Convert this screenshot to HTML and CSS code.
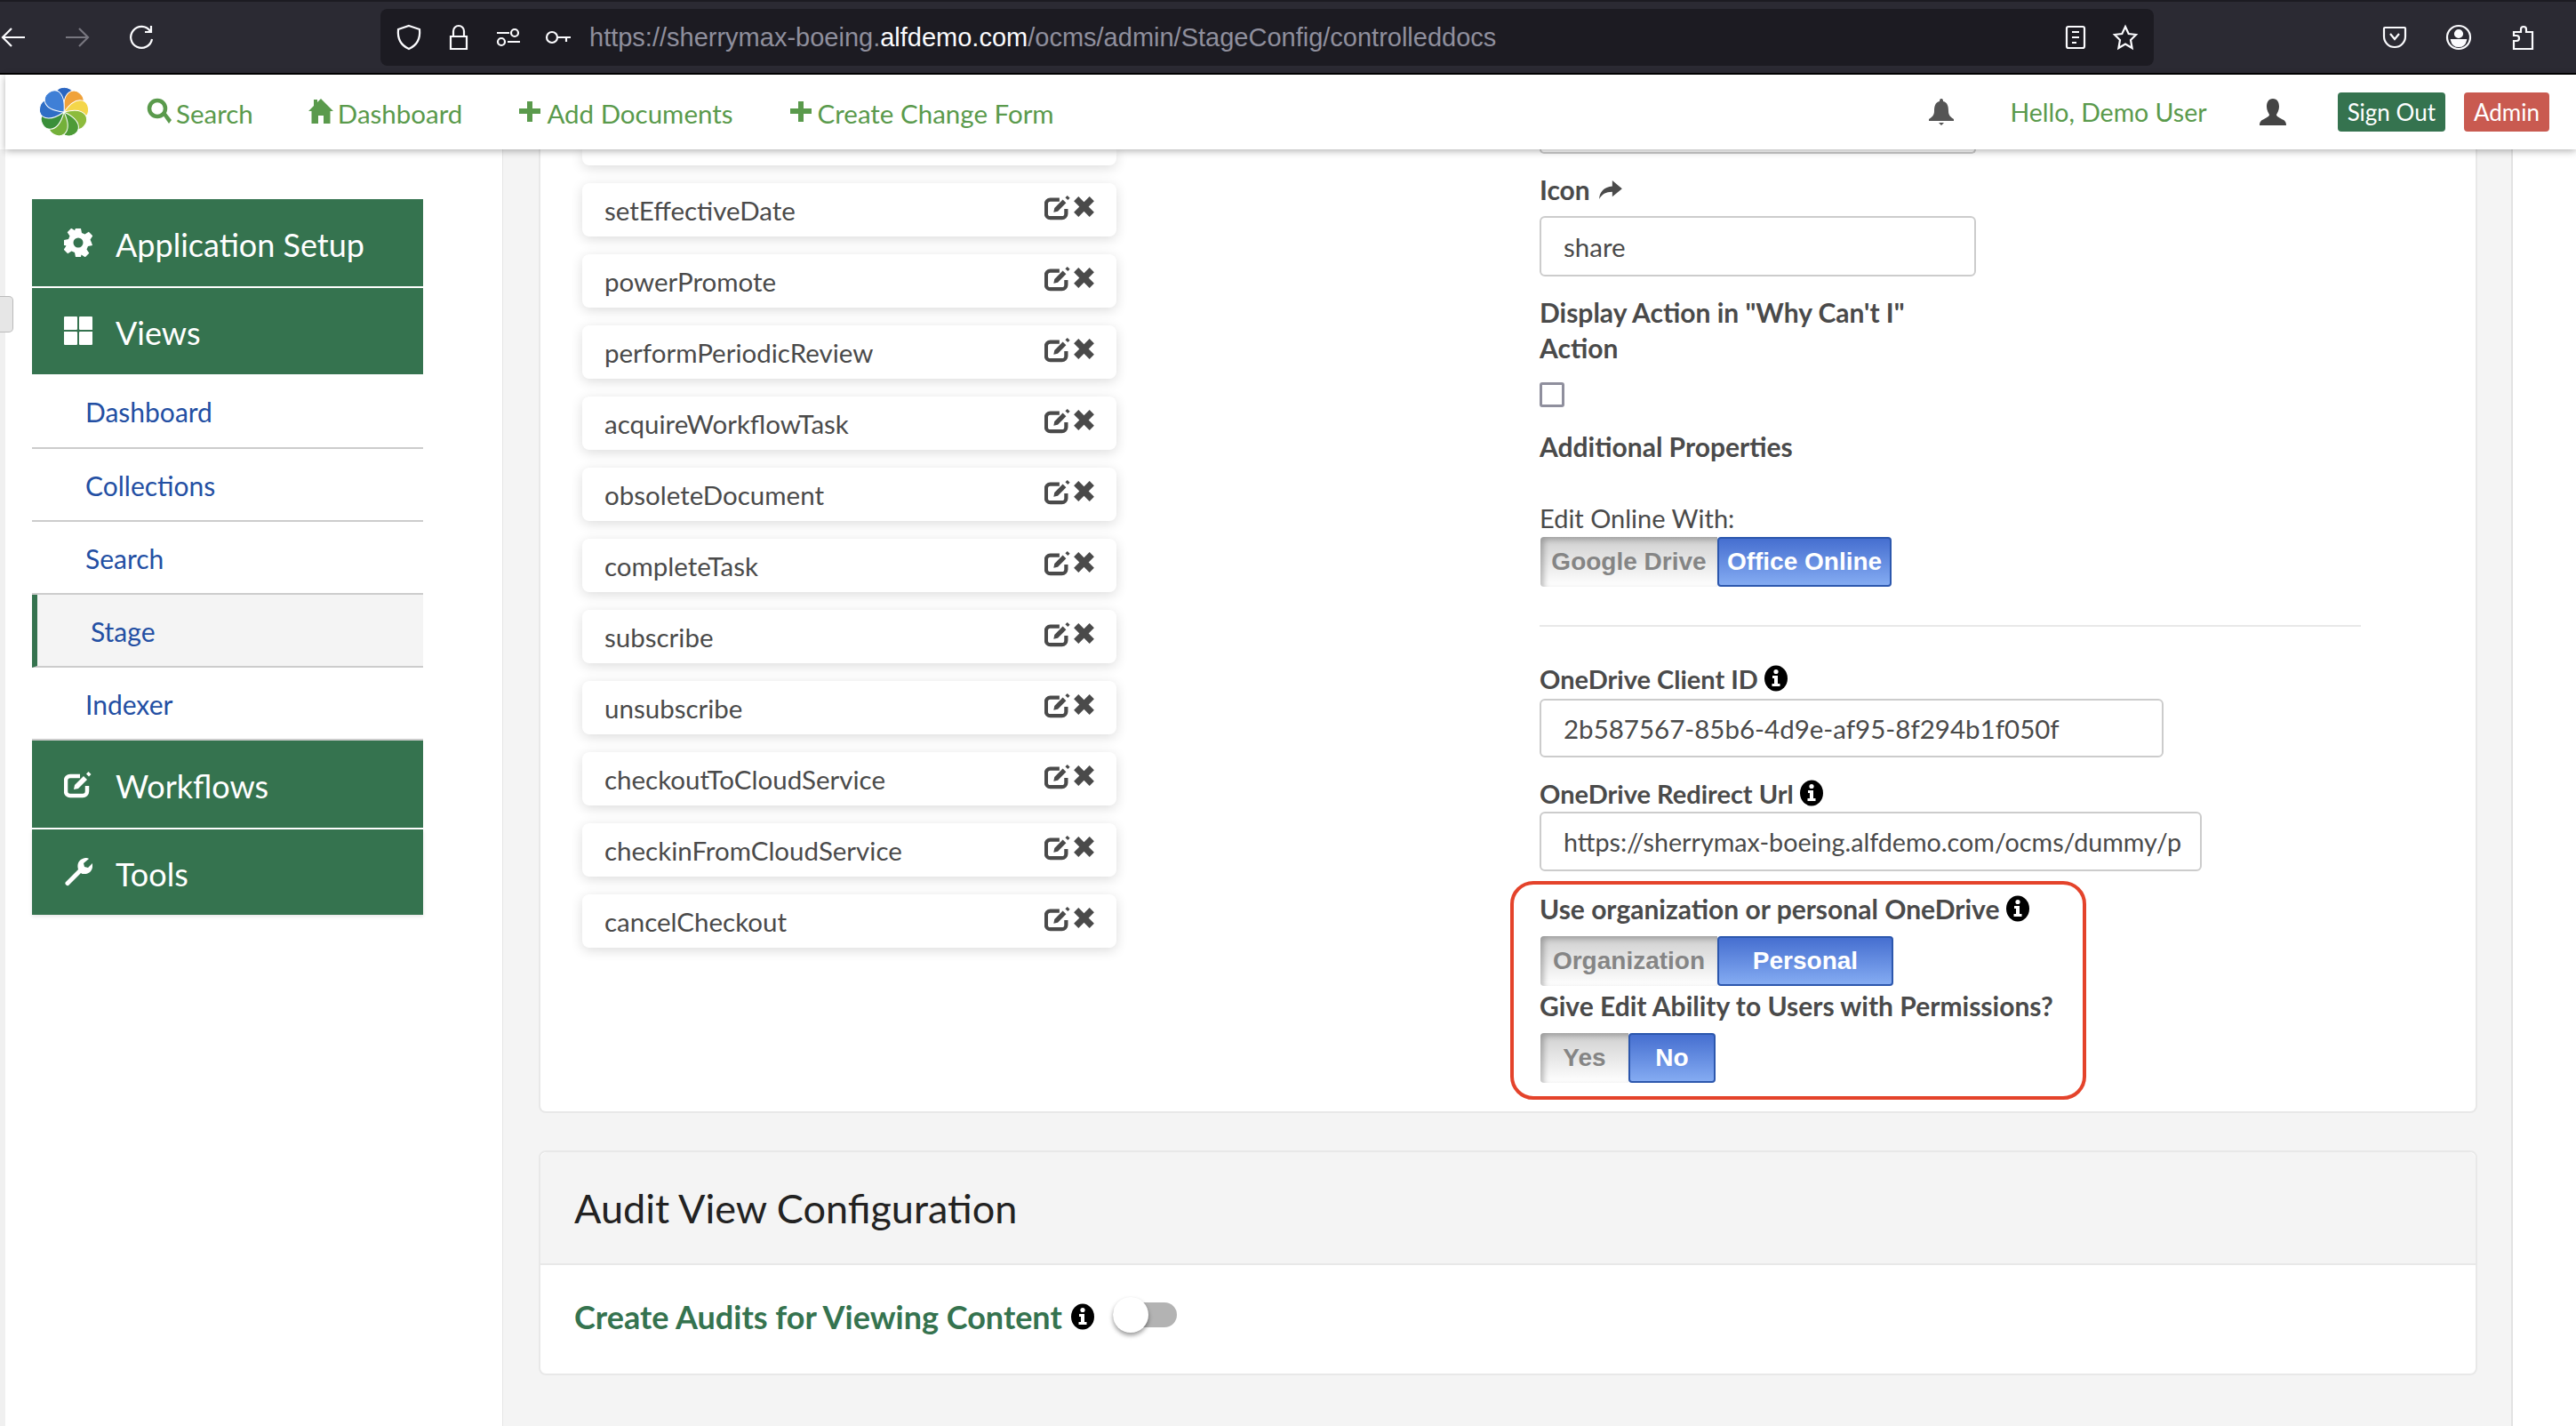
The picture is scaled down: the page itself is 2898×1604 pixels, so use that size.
FILE: index.html
```html
<!DOCTYPE html>
<html lang="en">

<head>
  <meta charset="UTF-8">
  <title>Stage Config</title>
  <link rel="stylesheet" href="styles.css">
</head>

<body>
  <svg class="icon-defs" width="0" height="0">
    <symbol id="i-edit" viewBox="0 0 32 32">
      <path d="M26 18v6a5 5 0 0 1-5 5H7a5 5 0 0 1-5-5V12a5 5 0 0 1 5-5h11" fill="none" stroke="currentColor" stroke-width="4.500"/>
      <path d="M11 22l1-5 10-10 4 4-10 10z" fill="currentColor"/>
      <path d="M25 4.500l2.500-2.500 3 3-2.500 2.500z" fill="currentColor"/>
    </symbol>
    <symbol id="i-x" viewBox="0 0 28 28">
      <path d="M3 8l5-5 6 6 6-6 5 5-6 6 6 6-5 5-6-6-6 6-5-5 6-6z" fill="currentColor"/>
    </symbol>
    <symbol id="i-info" viewBox="0 0 26 30">
      <ellipse cx="13" cy="15" rx="13" ry="14.500" fill="#000"/>
      <circle cx="13" cy="7.500" r="2.600" fill="#fff"/>
      <path d="M9 12h6v9h2.500v3h-9v-3H11v-6H9z" fill="#fff"/>
    </symbol>
  </svg>

  <!-- browser toolbar -->
  <header class="toolbar">
    <div class="tool-group">
      <svg class="tool-icon back" viewBox="0 0 30 30"><path d="M28 15H3M13 5L3 15l10 10" /></svg>
      <svg class="tool-icon forward" viewBox="0 0 30 30"><path d="M2 15h25M17 5l10 10-10 10" /></svg>
      <svg class="tool-icon reload" viewBox="0 0 30 30"><path d="M25 8A12 12 0 1 0 27 17M26 2v7h-7" /></svg>
    </div>
    <div class="urlbar">
      <svg class="tool-icon shield" viewBox="0 0 30 30"><path d="M15 2l12 4c1 10-3 18-12 22C6 24 2 16 3 6z" /></svg>
      <svg class="tool-icon lock" viewBox="0 0 30 30"><path d="M9 14V8a6 6 0 0 1 12 0v6M6 14h18v14H6z" /></svg>
      <svg class="tool-icon perm" viewBox="0 0 30 30"><path d="M2 10h14M14 20h14" /><circle cx="22" cy="10" r="4" /><circle cx="7" cy="20" r="4" /></svg>
      <svg class="tool-icon key" viewBox="0 0 30 30"><circle cx="8" cy="15" r="6" /><path d="M14 15h15M24 15v5" /></svg>
      <span class="url">https://sherrymax-boeing.<b>alfdemo.com</b>/ocms/admin/StageConfig/controlleddocs</span>
      <svg class="tool-icon reader" viewBox="0 0 30 30"><path d="M7 3h16a2 2 0 0 1 2 2v20a2 2 0 0 1-2 2H7a2 2 0 0 1-2-2V5a2 2 0 0 1 2-2zM11 9h8M11 15h8M11 21h5" /></svg>
      <svg class="tool-icon star" viewBox="0 0 30 30"><path d="M15 3l3.700 8 8.300 1-6 6 1.600 9L15 22.500 7.400 27 9 18l-6-6 8.300-1z" /></svg>
    </div>
    <div class="tool-group tool-right">
      <svg class="tool-icon pocket" viewBox="0 0 30 30"><path d="M4 4h22a1 1 0 0 1 1 1v9a12 12 0 0 1-24 0V5a1 1 0 0 1 1-1zM10 11l5 6 5-6" /></svg>
      <svg class="tool-icon account" viewBox="0 0 30 30"><circle cx="15" cy="15" r="13" /><circle cx="15" cy="11" r="4" fill="#fbfbfe" /><path d="M7 18h16c-1 5-4 7-8 7s-7-2-8-7z" fill="#fbfbfe" /></svg>
      <svg class="tool-icon puzzle" viewBox="0 0 30 30"><path d="M13 28H5v-9h3a3 3 0 0 0 0-6H5V9h8V6a3 3 0 0 1 6 0v3h7v19z" /></svg>
    </div>
  </header>

  <!-- app nav -->
  <nav class="topnav">
    <svg class="logo" viewBox="-30 -30 60 60">
      <g class="petals">
        <path transform="rotate(0)" d="M0 0C-7-7-13-15-9-23-5-30 7-29 10-22 12-14 6-6 0 0z" fill="#2b66c1"/>
        <path transform="rotate(40)" d="M0 0C-7-7-13-15-9-23-5-30 7-29 10-22 12-14 6-6 0 0z" fill="#f0a23a"/>
        <path transform="rotate(80)" d="M0 0C-7-7-13-15-9-23-5-30 7-29 10-22 12-14 6-6 0 0z" fill="#f4d64a"/>
        <path transform="rotate(120)" d="M0 0C-7-7-13-15-9-23-5-30 7-29 10-22 12-14 6-6 0 0z" fill="#8dbb3c"/>
        <path transform="rotate(160)" d="M0 0C-7-7-13-15-9-23-5-30 7-29 10-22 12-14 6-6 0 0z" fill="#4d9b37"/>
        <path transform="rotate(200)" d="M0 0C-7-7-13-15-9-23-5-30 7-29 10-22 12-14 6-6 0 0z" fill="#74b03a"/>
        <path transform="rotate(240)" d="M0 0C-7-7-13-15-9-23-5-30 7-29 10-22 12-14 6-6 0 0z" fill="#3a8f3a"/>
        <path transform="rotate(280)" d="M0 0C-7-7-13-15-9-23-5-30 7-29 10-22 12-14 6-6 0 0z" fill="#2f6ec6"/>
        <path transform="rotate(320)" d="M0 0C-7-7-13-15-9-23-5-30 7-29 10-22 12-14 6-6 0 0z" fill="#3f7fd6"/>
      </g>
    </svg>
    <div class="nav-links">
      <a class="nav-link"><svg class="nav-icon" viewBox="0 0 28 30"><circle cx="12" cy="12" r="9" fill="none" stroke="currentColor" stroke-width="4.500"/><path d="M18 19l3-3 7 9-3 4z" fill="currentColor"/></svg>Search</a>
      <a class="nav-link"><svg class="nav-icon" viewBox="0 0 28 30"><path d="M14 1l14 14h-3.500v14H17v-9h-6v9H3.500V15H0L6 9V2h4v3z" fill="currentColor"/></svg>Dashboard</a>
      <a class="nav-link"><svg class="nav-icon" viewBox="0 0 26 30"><path d="M10 4h6v8h9v6h-9v9h-6v-9H1v-6h9z" fill="currentColor"/></svg>Add Documents</a>
      <a class="nav-link"><svg class="nav-icon" viewBox="0 0 26 30"><path d="M10 4h6v8h9v6h-9v9h-6v-9H1v-6h9z" fill="currentColor"/></svg>Create Change Form</a>
    </div>
    <div class="nav-right">
      <svg class="bell" viewBox="0 0 28 30"><path d="M14 0c2 0 2 2 2 3 5 1 6 6 6 11 0 5 3 7 6 9v2H0v-2c3-2 6-4 6-9 0-5 1-10 6-11 0-1 0-3 2-3zM11 27h6l-3 3z" fill="currentColor"/></svg>
      <span class="hello">Hello, Demo User</span>
      <svg class="user" viewBox="0 0 30 30"><path d="M15 0c5 0 7 4 7 9 0 4-2 7-3 9 0 2 3 3 6 5 3 1 5 3 5 7H0c0-4 2-6 5-7 3-2 6-3 6-5-1-2-3-5-3-9 0-5 2-9 7-9z" fill="currentColor"/></svg>
      <a class="nav-btn btn-green">Sign Out</a>
      <a class="nav-btn btn-red">Admin</a>
    </div>
  </nav>

  <div class="page">
    <aside class="sidebar">
      <div class="side-head"><svg class="side-icon" viewBox="0 0 32 32"><path fill="#fff" fill-rule="evenodd" d="M13 0h6l1 5 3.500 1.500 4.300-2.800 4.500 4.500-2.800 4.300L31 16l1 3-5 1-1.500 3.500 2.800 4.300-4.500 4.500-4.300-2.800L19 32h-6l-1-5-3.500-1.500-4.300 2.800-4.500-4.500 2.800-4.300L1 19H0v-6l5-1 1.500-3.500-2.800-4.300 4.500-4.500 4.300 2.800L12 2zM16 10.500a5.500 5.500 0 1 0 0 11 5.500 5.500 0 0 0 0-11z"/></svg>Application Setup</div>
      <div class="side-head"><svg class="side-icon" viewBox="0 0 32 32"><path fill="#fff" d="M1 0h13a1 1 0 0 1 1 1v13a1 1 0 0 1-1 1H0V1a1 1 0 0 1 1-1zM18 0h13a1 1 0 0 1 1 1v14H18a1 1 0 0 1-1-1V1a1 1 0 0 1 1-1zM0 17h14a1 1 0 0 1 1 1v13a1 1 0 0 1-1 1H1a1 1 0 0 1-1-1zM18 17h14v14a1 1 0 0 1-1 1H18a1 1 0 0 1-1-1V18a1 1 0 0 1 1-1z"/></svg>Views</div>
      <a class="side-link">Dashboard</a>
      <a class="side-link">Collections</a>
      <a class="side-link">Search</a>
      <a class="side-link active">Stage</a>
      <a class="side-link">Indexer</a>
      <div class="side-head"><svg class="side-icon" viewBox="0 0 32 32"><use href="#i-edit"/></svg>Workflows</div>
      <div class="side-head"><svg class="side-icon" viewBox="0 0 32 32"><path fill="#fff" d="M2 27L16 13c-2-6 1-12 8-13 2 0 3 0 4 1l-6 5 1 4 4 1 5-5c1 6-2 12-9 12-2 0-3 0-4-1L5 31c-2 1-5-2-3-4z"/></svg>Tools</div>
    </aside>
    <div class="handle"></div>

    <main class="content">
      <section class="card">
        <div class="card-cols">
          <div class="action-list">
            <div class="action-cut"></div>
            <div class="action"><span>setEffectiveDate</span><span class="action-icons"><svg class="a-edit"><use href="#i-edit"/></svg><svg class="a-x"><use href="#i-x"/></svg></span></div>
            <div class="action"><span>powerPromote</span><span class="action-icons"><svg class="a-edit"><use href="#i-edit"/></svg><svg class="a-x"><use href="#i-x"/></svg></span></div>
            <div class="action"><span>performPeriodicReview</span><span class="action-icons"><svg class="a-edit"><use href="#i-edit"/></svg><svg class="a-x"><use href="#i-x"/></svg></span></div>
            <div class="action"><span>acquireWorkflowTask</span><span class="action-icons"><svg class="a-edit"><use href="#i-edit"/></svg><svg class="a-x"><use href="#i-x"/></svg></span></div>
            <div class="action"><span>obsoleteDocument</span><span class="action-icons"><svg class="a-edit"><use href="#i-edit"/></svg><svg class="a-x"><use href="#i-x"/></svg></span></div>
            <div class="action"><span>completeTask</span><span class="action-icons"><svg class="a-edit"><use href="#i-edit"/></svg><svg class="a-x"><use href="#i-x"/></svg></span></div>
            <div class="action"><span>subscribe</span><span class="action-icons"><svg class="a-edit"><use href="#i-edit"/></svg><svg class="a-x"><use href="#i-x"/></svg></span></div>
            <div class="action"><span>unsubscribe</span><span class="action-icons"><svg class="a-edit"><use href="#i-edit"/></svg><svg class="a-x"><use href="#i-x"/></svg></span></div>
            <div class="action"><span>checkoutToCloudService</span><span class="action-icons"><svg class="a-edit"><use href="#i-edit"/></svg><svg class="a-x"><use href="#i-x"/></svg></span></div>
            <div class="action"><span>checkinFromCloudService</span><span class="action-icons"><svg class="a-edit"><use href="#i-edit"/></svg><svg class="a-x"><use href="#i-x"/></svg></span></div>
            <div class="action"><span>cancelCheckout</span><span class="action-icons"><svg class="a-edit"><use href="#i-edit"/></svg><svg class="a-x"><use href="#i-x"/></svg></span></div>
          </div>

          <form class="props">
            <div class="input-cut"></div>
            <label class="lbl lbl-icon">Icon <svg class="share" viewBox="0 0 28 24"><path d="M16 0l12 10-12 10v-6C8 14 3 17 0 23c0-9 6-15 16-16z" fill="currentColor"/></svg></label>
            <div class="field field-short">share</div>
            <label class="lbl lbl-why">Display Action in "Why Can't I" Action</label>
            <div class="check"></div>
            <div class="lbl lbl-add">Additional Properties</div>
            <div class="plain-lbl">Edit Online With:</div>
            <div class="switch">
              <span class="sw-off sw-google">Google Drive</span><span class="sw-on sw-office">Office Online</span>
            </div>
            <hr class="divider">
            <label class="lbl lbl-client">OneDrive Client ID <svg class="info"><use href="#i-info"/></svg></label>
            <div class="field field-client">2b587567-85b6-4d9e-af95-8f294b1f050f</div>
            <label class="lbl lbl-redirect">OneDrive Redirect Url <svg class="info"><use href="#i-info"/></svg></label>
            <div class="field field-redirect">https://sherrymax-boeing.alfdemo.com/ocms/dummy/p</div>
            <label class="lbl lbl-use">Use organization or personal OneDrive <svg class="info"><use href="#i-info"/></svg></label>
            <div class="switch switch-org">
              <span class="sw-off sw-org">Organization</span><span class="sw-on sw-personal">Personal</span>
            </div>
            <label class="lbl lbl-give">Give Edit Ability to Users with Permissions?</label>
            <div class="switch switch-yes">
              <span class="sw-off sw-yes">Yes</span><span class="sw-on sw-no">No</span>
            </div>
            <div class="callout"></div>
          </form>
        </div>
      </section>

      <section class="card audit">
        <h2 class="audit-title">Audit View Configuration</h2>
        <div class="audit-body">
          <span class="audit-label">Create Audits for Viewing Content</span>
          <svg class="info"><use href="#i-info"/></svg>
          <span class="slider"><span class="slider-thumb"></span></span>
        </div>
      </section>
    </main>
  </div>
</body>

</html>
```

FILE: styles.css
```css
* {
  box-sizing: border-box;
}

html,
body {
  height: 100%;
}

body {
  margin: 0;
  height: 1604px;
  overflow: hidden;
  position: relative;
  font-family: 'Lato', sans-serif;
  background-color: #fff;
  color: #4a4a4a;
}

.icon-defs {
  position: absolute;
}

/* browser toolbar */
.toolbar {
  height: 84px;
  display: flex;
  align-items: center;
  background-color: #2b2a33;
  border-top: 2px solid #1c1b22;
  border-bottom: 2px solid #000;
}

.tool-group {
  display: flex;
  align-items: center;
  gap: 42px;
  width: 428px;
}

.tool-icon {
  width: 30px;
  height: 30px;
  flex-shrink: 0;
  fill: none;
  stroke: #fbfbfe;
  stroke-width: 2.2;
}

.forward {
  stroke: #77767f;
}

.urlbar {
  width: 1995px;
  height: 64px;
  display: flex;
  align-items: center;
  gap: 26px;
  padding: 0 17px;
  background-color: #1c1b22;
  border-radius: 8px;
}

.url {
  flex: 1;
  margin-left: -6px;
  font-family: 'Liberation Sans', sans-serif;
  font-size: 29px;
  color: #8f8f9d;
}

.url b {
  font-weight: 400;
  color: #fbfbfe;
}

.tool-right {
  flex: 1;
  justify-content: flex-end;
  padding-right: 45px;
}

/* app nav */
.topnav {
  position: relative;
  z-index: 2;
  height: 84px;
  margin-left: 6px;
  display: flex;
  align-items: center;
  padding: 0 30px 0 36px;
  background-color: #fff;
  box-shadow: 0 2px 8px rgba(0, 0, 0, 0.3);
}

.logo {
  width: 60px;
  height: 60px;
}

.petals path {
  stroke: #fff;
  stroke-width: 1;
}

.nav-links {
  display: flex;
  align-items: center;
  gap: 62px;
  margin-left: 63px;
  padding-top: 3px;
}

.nav-link {
  display: flex;
  align-items: center;
  gap: 5px;
  font-size: 29.5px;
  color: #5a9a4c;
}

.nav-icon {
  width: 28px;
  height: 30px;
  margin-bottom: 6px;
}

.nav-right {
  margin-left: auto;
  display: flex;
  align-items: center;
}

.bell {
  width: 28px;
  height: 30px;
  color: #555;
}

.hello {
  font-size: 28.5px;
  color: #5a9a4c;
  margin-left: 63px;
}

.user {
  width: 30px;
  height: 30px;
  color: #444;
  margin-left: 59px;
}

.nav-btn {
  height: 44px;
  padding: 0 11px;
  display: flex;
  align-items: center;
  border-radius: 4px;
  font-size: 26px;
  color: #fff;
}

.btn-green {
  background-color: #35734f;
  margin-left: 58px;
}

.btn-red {
  background-color: #c95a50;
  margin-left: 21px;
}

/* layout */
.page {
  display: flex;
  height: 1436px;
  background-color: #f0f0f0;
}

.sidebar {
  width: 560px;
  margin-left: 6px;
  padding: 56px 89px 0 30px;
  background-color: #fff;
  border-right: 1px solid #e6e6e6;
}

.handle {
  position: absolute;
  left: 0;
  top: 333px;
  width: 15px;
  height: 41px;
  background-color: #e6e6e6;
  border: 1px solid #bbb;
  border-left: none;
  border-radius: 0 5px 5px 0;
}

.side-head {
  height: 98px;
  margin-bottom: 2px;
  display: flex;
  align-items: center;
  padding: 3px 0 0 36px;
  font-size: 36px;
  color: #fff;
  background-color: #35734f;
}

.side-icon {
  width: 32px;
  height: 32px;
  margin: -4px 26px 0 0;
  color: #fff;
}

.side-head:nth-child(2) {
  height: 97px;
  margin-bottom: 0;
}

.side-head:last-child {
  height: 96px;
  margin-bottom: 0;
  box-shadow: 0 2px 4px rgba(0, 0, 0, 0.1);
}

.side-link {
  height: 82px;
  display: flex;
  align-items: center;
  padding: 2px 0 0 60px;
  font-size: 30px;
  color: #234fa3;
  border-bottom: 2px solid #ccc;
}

.side-link:nth-child(3) {
  height: 84px;
}

.side-link.active {
  padding-left: 60px;
  background-color: #f4f4f4;
  border-left: 6px solid #35734f;
}

/* cards */
.content {
  flex: none;
  width: 2261px;
  padding: 0 38px 0 40px;
  background-color: #f4f4f4;
  border-right: 2px solid #e2e2e2;
}

.page::after {
  content: "";
  flex: 1;
  background-color: #fff;
}

.card {
  background-color: #fff;
  border: 2px solid #e8e8e8;
  border-top: none;
  border-radius: 0 0 8px 8px;
}

.card-cols {
  height: 1082px;
  display: flex;
  padding-left: 47px;
}

.action-list {
  width: 601px;
  display: flex;
  flex-direction: column;
  gap: 20px;
}

.action-cut,
.action {
  background-color: #fff;
  border-radius: 8px;
  box-shadow: 0 3px 14px rgba(0, 0, 0, 0.14);
}

.action-cut {
  height: 18px;
  border-radius: 0 0 8px 8px;
}

.action {
  height: 60px;
  flex-shrink: 0;
  display: flex;
  align-items: center;
  justify-content: space-between;
  padding: 1px 22px 0 25px;
  font-size: 29.5px;
}

.action-icons {
  display: flex;
  align-items: center;
  margin-top: -8px;
}

.a-edit {
  width: 30px;
  height: 30px;
}

.a-x {
  width: 29px;
  height: 29px;
}

/* form column */
.props {
  position: relative;
  margin-left: 476px;
  width: 800px;
}

.lbl {
  display: block;
  font-size: 30px;
  font-weight: 700;
  color: #4a4a4a;
}

.input-cut {
  width: 491px;
  height: 5px;
  border: 2px solid #ccc;
  border-top: none;
  border-radius: 0 0 6px 6px;
}

.lbl-icon {
  margin-top: 22px;
  line-height: 36px;
}

.share {
  width: 26px;
  height: 22px;
  margin-left: 3px;
}

.field {
  height: 68px;
  display: flex;
  align-items: center;
  padding-left: 25px;
  font-size: 29.5px;
  color: #4a4a4a;
  background-color: #fff;
  border: 2px solid #ccc;
  border-radius: 6px;
  white-space: nowrap;
}

.field-short {
  width: 491px;
  margin-top: 12px;
}

.lbl-why {
  width: 491px;
  margin-top: 20px;
  line-height: 40px;
}

.check {
  width: 28px;
  height: 28px;
  margin-top: 19px;
  border: 3px solid #8f8f9d;
  border-radius: 3px;
}

.lbl-add {
  margin-top: 26px;
  line-height: 36px;
}

.plain-lbl {
  margin-top: 45px;
  font-size: 29px;
  line-height: 36px;
}

.switch {
  display: flex;
  width: 397px;
  height: 58px;
  margin-top: 2px;
  padding: 1px;
  font-family: 'Liberation Sans', sans-serif;
  font-size: 28px;
  font-weight: 700;
  border-radius: 4px;
}

.sw-off {
  display: flex;
  align-items: center;
  justify-content: center;
  color: #858585;
  background: linear-gradient(#cfcfcf, #fff);
  border-radius: 4px 0 0 4px;
  box-shadow: inset 4px 3px 6px rgba(0, 0, 0, 0.25);
}

.sw-on {
  display: flex;
  align-items: center;
  justify-content: center;
  color: #fff;
  background: linear-gradient(#466fd0, #84abf2);
  border: 2px solid #2c57ad;
  border-radius: 4px;
}

.sw-google,
.sw-org {
  width: 199px;
}

.sw-office,
.sw-personal {
  flex: 1;
}

.divider {
  height: 2px;
  margin: 42px 0 0;
  border: none;
  background-color: #e8e8e8;
  width: 924px;
}

.lbl-client {
  margin-top: 41px;
  font-size: 29px;
  line-height: 36px;
}

.info {
  width: 26px;
  height: 30px;
  vertical-align: -3px;
}

.field-client {
  width: 702px;
  height: 66px;
  margin-top: 4px;
}

.lbl-redirect {
  margin-top: 23px;
  font-size: 29px;
  line-height: 36px;
}

.field-redirect {
  width: 745px;
  height: 67px;
  margin-top: 2px;
  font-size: 28.7px;
}

.lbl-use {
  margin-top: 24px;
  line-height: 36px;
}

.switch-org {
  margin-top: 12px;
  width: 399px;
}

.lbl-give {
  margin-top: 3px;
  line-height: 36px;
}

.switch-yes {
  margin-top: 12px;
  width: 199px;
}

.sw-yes {
  width: 99px;
}

.sw-no {
  flex: 1;
}

.callout {
  position: absolute;
  left: -33px;
  top: 823px;
  width: 648px;
  height: 246px;
  border: 4px solid #e4432b;
  border-radius: 26px;
}

/* audit card */
.audit {
  margin-top: 42px;
  border-top: 2px solid #e8e8e8;
  border-radius: 8px;
}

.audit-title {
  height: 127px;
  margin: 0;
  display: flex;
  align-items: center;
  padding-left: 38px;
  font-size: 45px;
  font-weight: 400;
  color: #222;
  background-color: #f4f4f4;
  border-bottom: 2px solid #e8e8e8;
  border-radius: 8px 8px 0 0;
}

.audit-body {
  height: 122px;
  display: flex;
  align-items: center;
  padding: 0 0 6px 38px;
}

.audit-label {
  font-size: 36px;
  font-weight: 700;
  color: #35734f;
}

.audit-body .info {
  margin-left: 10px;
}

.slider {
  position: relative;
  width: 72px;
  height: 28px;
  margin: -4px 0 0 21px;
  background-color: #b3b3b3;
  border-radius: 14px;
}

.slider-thumb {
  position: absolute;
  left: 0;
  top: -6px;
  width: 40px;
  height: 40px;
  background-color: #fff;
  border-radius: 50%;
  box-shadow: 0 3px 5px rgba(0, 0, 0, 0.4);
}
```
